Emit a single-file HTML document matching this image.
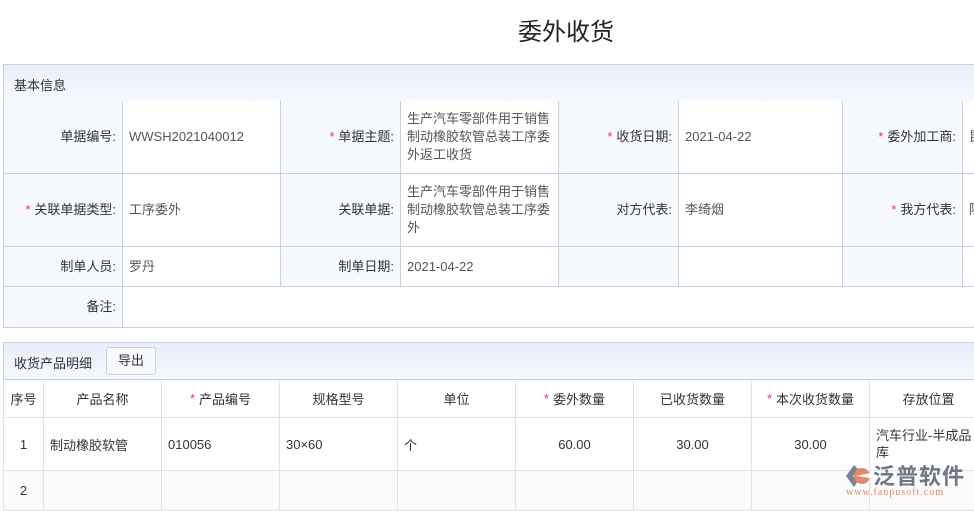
<!DOCTYPE html><html><head><meta charset="utf-8"><style>
*{margin:0;padding:0;box-sizing:border-box}
body{width:974px;height:508px;overflow:hidden;background:#fff;font-family:"Liberation Sans","Noto Sans CJK SC",sans-serif;font-size:13px;color:#333;position:relative}
.a{position:absolute}
.t{left:0;width:1132px;text-align:center;top:12px;font-size:24px;color:#222}
.hd{background:linear-gradient(#e8eef9,#f5f8fe);border:1px solid #c6d0e0}
.c{position:absolute;border-right:1px solid #c6d0e0;border-bottom:1px solid #c6d0e0;display:flex;align-items:center;padding:0 6px;line-height:18px}
.l{background:#f6f9fe;justify-content:flex-end;color:#333}
.v{background:#fff;color:#555}
.s{color:#f33;margin-right:4px}
.g{position:absolute;border-right:1px solid #e2e2e2;border-bottom:1px solid #e2e2e2;display:flex;align-items:center;justify-content:center;color:#333}
</style></head><body>
<div class="a t">委外收货</div>
<div class="a hd" style="left:3px;top:64px;width:980px;height:38px;padding:10px 10px;color:#333">基本信息</div>
<!-- row1 -->
<div class="c l" style="left:3px;top:101px;width:120px;height:73px;border-left:1px solid #c6d0e0">单据编号:</div>
<div class="c v" style="left:123px;top:101px;width:158px;height:73px">WWSH2021040012</div>
<div class="c l" style="left:281px;top:101px;width:120px;height:73px"><span class="s">*</span>单据主题:</div>
<div class="c v" style="left:401px;top:101px;width:158px;height:73px">生产汽车零部件用于销售制动橡胶软管总装工序委外返工收货</div>
<div class="c l" style="left:559px;top:101px;width:120px;height:73px"><span class="s">*</span>收货日期:</div>
<div class="c v" style="left:679px;top:101px;width:164px;height:73px">2021-04-22</div>
<div class="c l" style="left:843px;top:101px;width:120px;height:73px"><span class="s">*</span>委外加工商:</div>
<div class="c v" style="left:963px;top:101px;width:40px;height:73px">昆</div>
<!-- row2 -->
<div class="c l" style="left:3px;top:174px;width:120px;height:73px;border-left:1px solid #c6d0e0"><span class="s">*</span>关联单据类型:</div>
<div class="c v" style="left:123px;top:174px;width:158px;height:73px">工序委外</div>
<div class="c l" style="left:281px;top:174px;width:120px;height:73px">关联单据:</div>
<div class="c v" style="left:401px;top:174px;width:158px;height:73px">生产汽车零部件用于销售制动橡胶软管总装工序委外</div>
<div class="c l" style="left:559px;top:174px;width:120px;height:73px">对方代表:</div>
<div class="c v" style="left:679px;top:174px;width:164px;height:73px">李绮烟</div>
<div class="c l" style="left:843px;top:174px;width:120px;height:73px"><span class="s">*</span>我方代表:</div>
<div class="c v" style="left:963px;top:174px;width:40px;height:73px">陈</div>
<!-- row3 -->
<div class="c l" style="left:3px;top:247px;width:120px;height:40px;border-left:1px solid #c6d0e0">制单人员:</div>
<div class="c v" style="left:123px;top:247px;width:158px;height:40px">罗丹</div>
<div class="c l" style="left:281px;top:247px;width:120px;height:40px">制单日期:</div>
<div class="c v" style="left:401px;top:247px;width:158px;height:40px">2021-04-22</div>
<div class="c l" style="left:559px;top:247px;width:120px;height:40px"></div>
<div class="c v" style="left:679px;top:247px;width:164px;height:40px"></div>
<div class="c l" style="left:843px;top:247px;width:120px;height:40px"></div>
<div class="c v" style="left:963px;top:247px;width:40px;height:40px"></div>
<!-- row4 -->
<div class="c l" style="left:3px;top:287px;width:120px;height:41px;border-left:1px solid #c6d0e0">备注:</div>
<div class="c v" style="left:123px;top:287px;width:880px;height:41px"></div>

<div class="a hd" style="left:3px;top:342px;width:980px;height:38px;padding:10px 10px">收货产品明细</div>
<div class="a" style="left:106px;top:347px;width:50px;height:28px;border:1px solid #c6d0e0;border-radius:3px;background:#f7f9fc;text-align:center;line-height:26px;color:#333">导出</div>
<div class="g" style="left:3px;top:379px;width:41px;height:39px;border-left:1px solid #e2e2e2">序号</div>
<div class="g" style="left:44px;top:379px;width:118px;height:39px">产品名称</div>
<div class="g" style="left:162px;top:379px;width:118px;height:39px"><span class="s">*</span>产品编号</div>
<div class="g" style="left:280px;top:379px;width:118px;height:39px">规格型号</div>
<div class="g" style="left:398px;top:379px;width:118px;height:39px">单位</div>
<div class="g" style="left:516px;top:379px;width:118px;height:39px"><span class="s">*</span>委外数量</div>
<div class="g" style="left:634px;top:379px;width:118px;height:39px">已收货数量</div>
<div class="g" style="left:752px;top:379px;width:118px;height:39px"><span class="s">*</span>本次收货数量</div>
<div class="g" style="left:870px;top:379px;width:118px;height:39px">存放位置</div>

<div class="g" style="left:3px;top:418px;width:41px;height:53px;border-left:1px solid #e2e2e2">1</div>
<div class="g" style="left:44px;top:418px;width:118px;height:53px;justify-content:flex-start;padding-left:6px">制动橡胶软管</div>
<div class="g" style="left:162px;top:418px;width:118px;height:53px;justify-content:flex-start;padding-left:6px">010056</div>
<div class="g" style="left:280px;top:418px;width:118px;height:53px;justify-content:flex-start;padding-left:6px">30×60</div>
<div class="g" style="left:398px;top:418px;width:118px;height:53px;justify-content:flex-start;padding-left:6px">个</div>
<div class="g" style="left:516px;top:418px;width:118px;height:53px">60.00</div>
<div class="g" style="left:634px;top:418px;width:118px;height:53px">30.00</div>
<div class="g" style="left:752px;top:418px;width:118px;height:53px">30.00</div>
<div class="g" style="left:870px;top:418px;width:118px;height:53px;justify-content:flex-start;padding-left:6px;line-height:17px">汽车行业-半成品<br>库</div>

<div class="g" style="left:3px;top:471px;width:41px;height:40px;background:#fbfbfb;border-left:1px solid #e2e2e2">2</div>
<div class="g" style="left:44px;top:471px;width:118px;height:40px;background:#fbfbfb"></div>
<div class="g" style="left:162px;top:471px;width:118px;height:40px;background:#fbfbfb"></div>
<div class="g" style="left:280px;top:471px;width:118px;height:40px;background:#fbfbfb"></div>
<div class="g" style="left:398px;top:471px;width:118px;height:40px;background:#fbfbfb"></div>
<div class="g" style="left:516px;top:471px;width:118px;height:40px;background:#fbfbfb"></div>
<div class="g" style="left:634px;top:471px;width:118px;height:40px;background:#fbfbfb"></div>
<div class="g" style="left:752px;top:471px;width:118px;height:40px;background:#fbfbfb"></div>
<div class="g" style="left:870px;top:471px;width:118px;height:40px;background:#fbfbfb"></div>

<!-- logo -->
<svg class="a" style="left:844px;top:463px" width="28" height="26" viewBox="0 0 28 26"><path d="M10 2 L2 13 L10 24 L14 18 L9 13 L14 6Z" fill="#7a8494"/><circle cx="18" cy="13" r="8" fill="#e8866a"/><path d="M12 13 L26 10 L26 15Z" fill="#fff"/></svg>
<div class="a" style="left:873px;top:459px;font-size:22px;color:#6e7786;font-weight:bold;letter-spacing:1px">泛普软件</div>
<div class="a" style="left:846px;top:487px;font-size:10px;color:#e8866a;font-family:'Liberation Serif',serif;letter-spacing:1px">www.fanpusoft.com</div>
</body></html>
